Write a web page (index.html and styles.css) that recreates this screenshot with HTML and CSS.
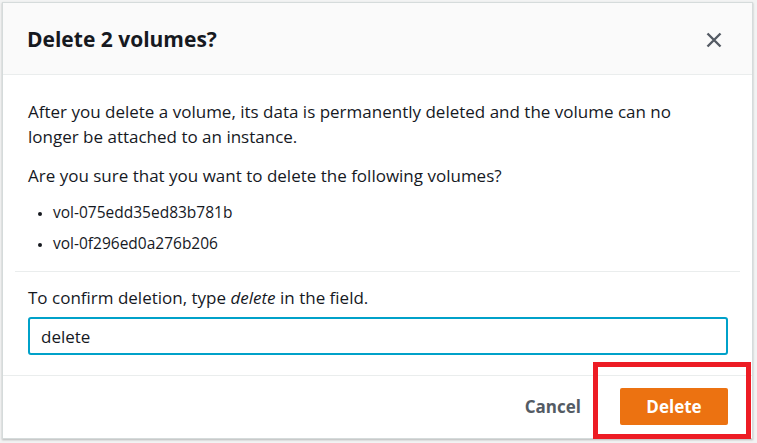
FILE: index.html
```html
<!DOCTYPE html>
<html lang="en">
<head>
<meta charset="utf-8">
<title>Delete 2 volumes?</title>
<link rel="stylesheet" href="styles.css">
</head>
<body>
<div class="modal">
  <div class="modal-header">
    <h2 class="modal-title">Delete 2 volumes?</h2>
    <button class="close-btn" aria-label="Close">
      <svg width="16" height="16" viewBox="0 0 16 16"><path d="M1.5 1.5 L14.5 14.5 M14.5 1.5 L1.5 14.5" stroke="#545b64" stroke-width="2.4" fill="none"/></svg>
    </button>
  </div>
  <div class="modal-body">
    <div class="section section-info">
      <p class="text intro">After you delete a volume, its data is permanently deleted and the volume can no longer be attached to an instance.</p>
      <p class="text question">Are you sure that you want to delete the following volumes?</p>
      <ul class="vol-list">
        <li>vol-075edd35ed83b781b</li>
        <li>vol-0f296ed0a276b206</li>
      </ul>
    </div>
    <div class="section section-confirm">
      <label class="text confirm-label" for="confirm">To confirm deletion, type <em>delete</em> in the field.</label>
      <input id="confirm" class="confirm-input" type="text" value="delete">
    </div>
  </div>
  <div class="modal-footer">
    <button class="btn-link">Cancel</button>
    <button class="btn-primary">Delete</button>
    <div class="highlight"></div>
  </div>
</div>
</body>
</html>
```
FILE: styles.css
```css
* { box-sizing: border-box; }
html, body { margin: 0; padding: 0; }
body {
  background: #f2f3f3;
  font-family: "Open Sans", "Noto Sans", sans-serif;
  color: #16191f;
  width: 757px;
  height: 443px;
  overflow: hidden;
}
.modal {
  position: relative;
  margin: 2px 0 0 2px;
  width: 751px;
  height: 437px;
  background: #fff;
  border: 1px solid #d5dbdb;
  box-shadow: 0 1px 2px rgba(0,0,0,0.25);
  display: flex;
  flex-direction: column;
}
.modal-header {
  height: 72px;
  background: #fafafa;
  border-bottom: 1px solid #eaeded;
  display: flex;
  align-items: center;
  justify-content: space-between;
  padding: 0 30px 0 24px;
  flex-shrink: 0;
}
.modal-title {
  margin: 0;
  font-size: 21px;
  font-weight: 700;
  color: #16191f;
}
.close-btn {
  background: none;
  border: 0;
  padding: 0;
  width: 16px;
  height: 16px;
  display: flex;
  margin-top: 2px;
}
.modal-body {
  padding: 0 12px;
  flex: 1;
}
.section { padding: 0 13px; }
.section-info {
  padding-top: 24px;
  padding-bottom: 17px;
  border-bottom: 1px solid #eaeded;
}
.text {
  margin: 0;
  font-size: 17px;
  line-height: 25px;
}
.intro { max-width: 680px; }
.question { margin-top: 14px; }
.vol-list {
  margin: 13px 0 0;
  padding: 0 0 0 25px;
  font-size: 15.5px;
  line-height: 22px;
}
.vol-list li + li { margin-top: 9px; }
.vol-list li::marker { font-size: 11px; }
.section-confirm {
  padding-top: 13px;
  padding-bottom: 18px;
}
.confirm-label { display: block; }
.confirm-input {
  display: block;
  margin-top: 7px;
  width: 700px;
  height: 38px;
  border: 2px solid #00a1c9;
  border-radius: 3px;
  padding: 0 11px;
  font-family: inherit;
  font-size: 17px;
  color: #16191f;
  outline: none;
}
.modal-footer {
  position: relative;
  height: 63px;
  border-top: 1px solid #eaeded;
  display: flex;
  align-items: center;
  justify-content: flex-end;
  padding: 0 24px 2px 0;
  gap: 39px;
  flex-shrink: 0;
}
.btn-link {
  background: none;
  border: 0;
  padding: 0;
  font-family: inherit;
  font-size: 17px;
  font-weight: 700;
  color: #545b64;
}
.btn-primary {
  width: 108px;
  height: 37px;
  background: #ec7211;
  border: 0;
  border-radius: 2px;
  font-family: inherit;
  font-size: 17px;
  font-weight: 700;
  color: #fff;
}
.highlight {
  position: absolute;
  left: 590px;
  top: -14px;
  width: 158px;
  height: 77px;
  border: 5px solid #ed1c24;
  pointer-events: none;
}
```
